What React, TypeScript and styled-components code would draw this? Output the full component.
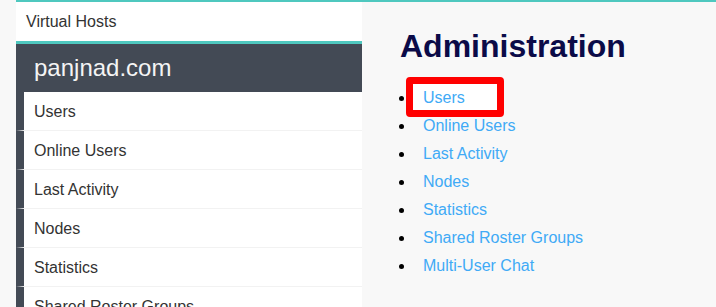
import React from "react";
import styled, { createGlobalStyle } from "styled-components";

const GlobalStyle = createGlobalStyle`
    html, body {
        margin: 0;
        padding: 0;
        overflow: hidden;
        background: #f8f8f8;
        font-family: "Liberation Sans", Arial, sans-serif;
    }
`;

const menu = [
    "Users",
    "Online Users",
    "Last Activity",
    "Nodes",
    "Statistics",
    "Shared Roster Groups",
    "Multi-User Chat",
];

const Page = styled.div`
    height: 307px;
    padding-left: 16px;
    overflow: hidden;
`;

const Frame = styled.div`
    display: flex;
    height: 100%;
    border-top: 2px solid #4fc8bf;
`;

const Sidebar = styled.nav`
    width: 346px;
    flex-shrink: 0;
    background: #ffffff;
    display: flex;
    flex-direction: column;
    overflow: hidden;
`;

const HostsRow = styled.div`
    flex-shrink: 0;
    height: 39px;
    display: flex;
    align-items: center;
    padding-left: 10px;
    font-size: 16px;
    color: #333333;
    border-bottom: 3px solid #4fc8bf;
`;

const HostTitle = styled.div`
    flex-shrink: 0;
    height: 48px;
    display: flex;
    align-items: center;
    padding-left: 18px;
    background: #434a55;
    color: #f4f4f4;
    font-size: 24px;
`;

const MenuItem = styled.div`
    flex-shrink: 0;
    height: 37px;
    padding-top: 1px;
    display: flex;
    align-items: center;
    padding-left: 10px;
    border-left: 8px solid #434a55;
    border-bottom: 1px solid #f2f2f2;
    font-size: 16px;
    color: #333333;
`;

const Main = styled.main`
    flex: 1;
    padding-left: 38px;
`;

const Title = styled.h1`
    margin: 26px 0 20px;
    font-size: 32px;
    line-height: 36px;
    font-weight: bold;
    color: #0b0b48;
`;

const LinkList = styled.ul`
    margin: 0;
    padding-left: 15px;
    list-style: disc;
    color: #000000;
`;

const LinkItem = styled.li`
    position: relative;
    font-size: 16px;
    line-height: 28px;
`;

const Link = styled.a`
    position: relative;
    z-index: 1;
    padding-left: 8px;
    color: #40aaf6;
    text-decoration: none;
`;

// red annotation drawn over the first link
const Highlight = styled.span`
    position: absolute;
    left: -9px;
    top: -7px;
    width: 84px;
    height: 26px;
    border: 7px solid #ff0000;
    border-radius: 4px;
    background: #ffffff;
`;

const App = () => {
    return (
        <>
            <GlobalStyle />
            <Page>
                <Frame>
                    <Sidebar>
                        <HostsRow>Virtual Hosts</HostsRow>
                        <HostTitle>panjnad.com</HostTitle>
                        {menu.map((item) => (
                            <MenuItem key={item}>{item}</MenuItem>
                        ))}
                    </Sidebar>
                    <Main>
                        <Title>Administration</Title>
                        <LinkList>
                            {menu.map((item, i) => (
                                <LinkItem key={item}>
                                    {i === 0 && <Highlight />}
                                    <Link href="#">{item}</Link>
                                </LinkItem>
                            ))}
                        </LinkList>
                    </Main>
                </Frame>
            </Page>
        </>
    );
};

export default App;
